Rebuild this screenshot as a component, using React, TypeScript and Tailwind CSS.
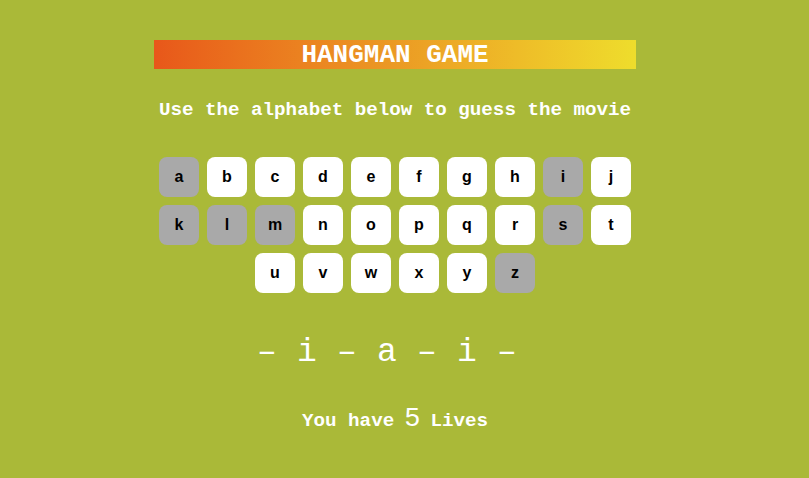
const letters = 'abcdefghijklmnopqrstuvwxyz'.split('')
const used = ['a', 'i', 'k', 'l', 'm', 's', 'z']
const word = ['–', 'i', '–', 'a', '–', 'i', '–']

export default function App() {
  return (
    <main className="min-h-screen bg-[#aab938] pt-10" style={{ fontFamily: '"Liberation Mono", "Courier New", monospace' }}>
      <div className="w-[790px] flex flex-col items-center">
        {/* title */}
        <h1 className="w-[482px] h-[29px] flex items-center justify-center text-white font-bold text-[26px] leading-none bg-gradient-to-r from-[#e8571a] via-[#eb9a24] to-[#eedd2c]">
          HANGMAN GAME
        </h1>

        <p className="mt-[32px] text-white font-bold text-[19.2px] leading-none">
          Use the alphabet below to guess the movie
        </p>

        {/* alphabet */}
        <div className="mt-[37px] w-[480px] flex flex-wrap justify-center gap-2">
          {letters.map((l) => (
            <button
              key={l}
              className={`w-10 h-10 rounded-lg flex items-center justify-center text-black font-bold text-[16px] ${used.includes(l) ? 'bg-[#a9a9a9]' : 'bg-white'}`}
              style={{ fontFamily: '"Liberation Sans", Arial, sans-serif' }}
            >
              {l}
            </button>
          ))}
        </div>

        {/* word */}
        <div className="mt-[43px] pr-4 flex text-white text-[33px] leading-none">
          {word.map((c, i) => (
            <span key={i} className="w-10 text-center">{c}</span>
          ))}
        </div>

        <p className="mt-[37px] text-white font-bold text-[19.2px] leading-none flex items-baseline">
          You have <span className="font-normal text-[27px] mx-[10px]">5</span> Lives
        </p>
      </div>
    </main>
  )
}
